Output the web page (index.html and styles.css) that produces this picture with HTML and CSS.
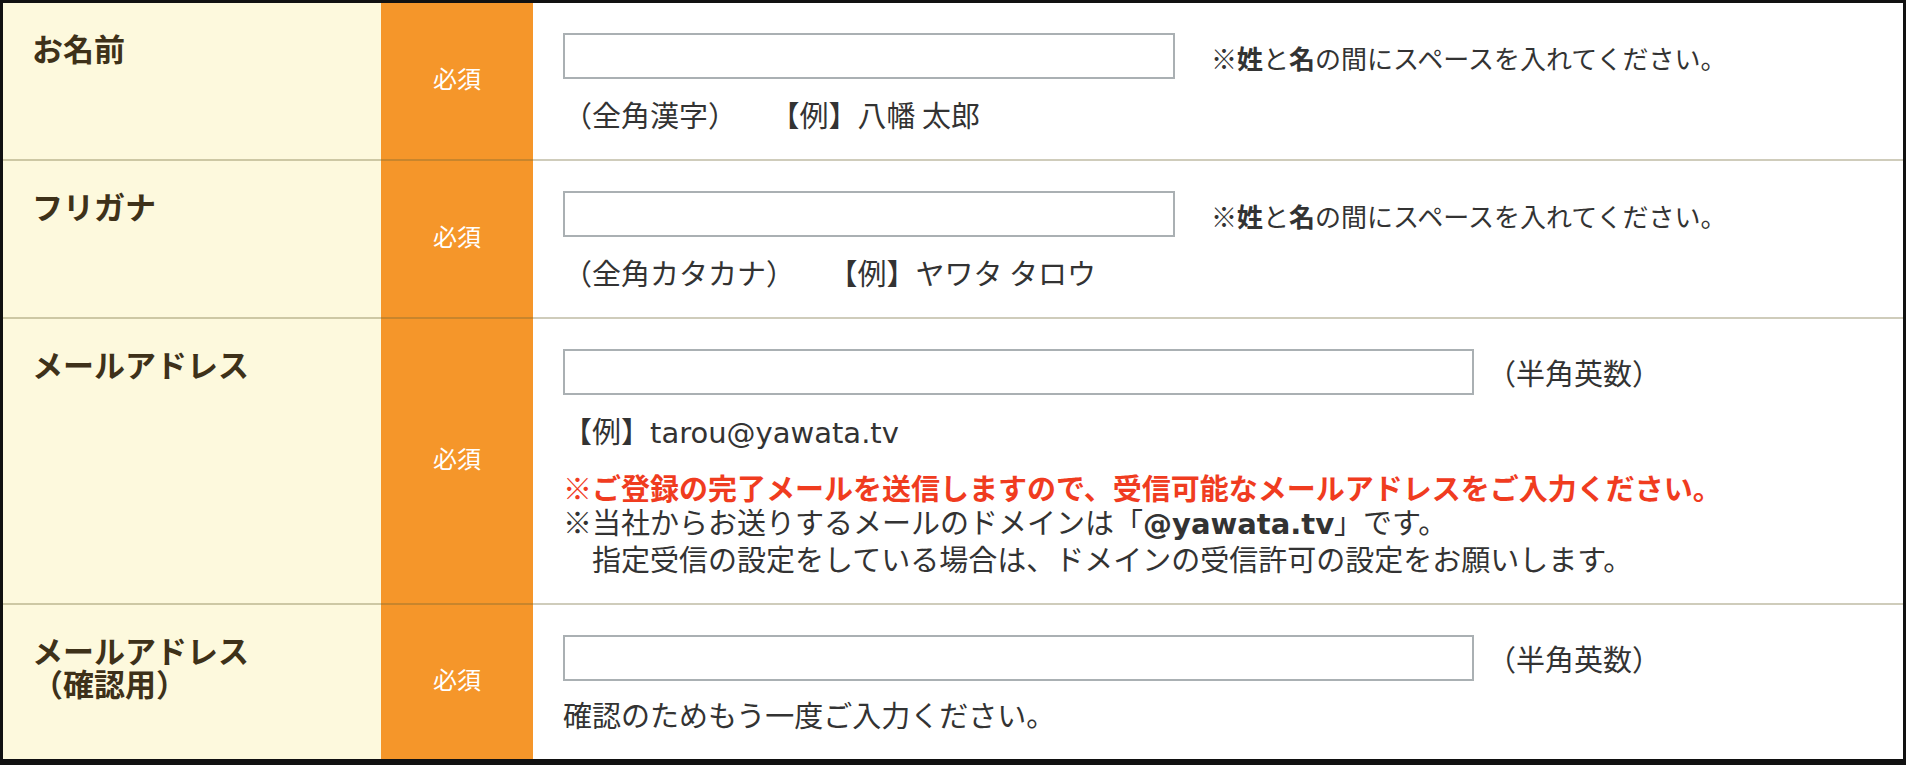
FILE: index.html
```html
<!DOCTYPE html>
<html lang="ja">
<head>
    <meta charset="UTF-8">
    <meta name="viewport" content="width=device-width, initial-scale=1.0">
    <title>お申し込みフォーム</title>
    <link rel="stylesheet" href="styles.css">
</head>
<body>
    <div class="form-table">
        <div class="row">
            <div class="label">お名前</div>
            <div class="req"><span>必須</span></div>
            <div class="field">
                <div class="input-line">
                    <input type="text" class="input-short" name="name">
                    <p class="note">※<b>姓</b>と<b>名</b>の間にスペースを入れてください。</p>
                </div>
                <p class="hint"><span>（全角漢字）</span><span class="example">【例】八幡 太郎</span></p>
            </div>
        </div>

        <div class="row">
            <div class="label">フリガナ</div>
            <div class="req"><span>必須</span></div>
            <div class="field">
                <div class="input-line">
                    <input type="text" class="input-short" name="kana">
                    <p class="note">※<b>姓</b>と<b>名</b>の間にスペースを入れてください。</p>
                </div>
                <p class="hint"><span>（全角カタカナ）</span><span class="example">【例】ヤワタ タロウ</span></p>
            </div>
        </div>

        <div class="row">
            <div class="label">メールアドレス</div>
            <div class="req"><span>必須</span></div>
            <div class="field">
                <div class="input-line">
                    <input type="email" class="input-long" name="email">
                    <p class="note note-paren">（半角英数）</p>
                </div>
                <p class="hint">【例】<span class="en">tarou@yawata.tv</span></p>
                <p class="warn">※ご登録の完了メールを送信しますので、受信可能なメールアドレスをご入力ください。</p>
                <p class="info">※当社からお送りするメールのドメインは「<b class="en">@yawata.tv</b>」です。<br>　指定受信の設定をしている場合は、ドメインの受信許可の設定をお願いします。</p>
            </div>
        </div>

        <div class="row last">
            <div class="label">メールアドレス<br>（確認用）</div>
            <div class="req"><span>必須</span></div>
            <div class="field">
                <div class="input-line">
                    <input type="email" class="input-long" name="email_confirm">
                    <p class="note note-paren">（半角英数）</p>
                </div>
                <p class="hint hint-tight">確認のためもう一度ご入力ください。</p>
            </div>
        </div>
    </div>
</body>
</html>
```

FILE: styles.css
```css
body {
    margin: 0;
    background-color: #111;
    font-family: "Noto Sans CJK JP", sans-serif;
    color: #333;
}
.form-table {
    border: 3px solid #111;
    background-color: #fff;
}
.row {
    display: grid;
    grid-template-columns: 378px 152px 1fr;
}
.row > div {
    border-bottom: 2px solid rgba(110, 100, 50, 0.33);
}
.row.last > div {
    border-bottom: none;
}
.label {
    background-color: #fdf9dd;
    color: #3e3119;
    font-size: 31px;
    font-weight: bold;
    line-height: 33px;
    padding: 28px 0 0 29px;
}
.req {
    background-color: #f5962a;
    color: #fff;
    font-size: 24px;
    display: flex;
    align-items: center;
    justify-content: center;
    padding-bottom: 8px;
}
.field {
    background-color: #fff;
    padding: 30px 28px 28px 30px;
    font-size: 29px;
    line-height: 34px;
}
.field p {
    margin: 0;
}
.input-line {
    display: flex;
    align-items: center;
}
input {
    box-sizing: border-box;
    height: 46px;
    margin: 0;
    padding: 0 10px;
    border: 2px solid #aab0b3;
    background: #fff;
    font-size: 20px;
}
.input-short {
    width: 612px;
}
.input-long {
    width: 911px;
}
.note {
    margin-left: 36px !important;
    font-size: 26px;
    padding-top: 3px;
}
.note-paren {
    margin-left: 13px !important;
    font-size: 29px;
    padding-top: 0;
}
.hint {
    margin-top: 18px !important;
}
.hint-tight {
    margin-top: 16px !important;
}
.example {
    margin-left: 48px;
}
.en {
    font-family: "DejaVu Sans", sans-serif;
}
.warn {
    margin-top: 20px !important;
    color: #f03c1f;
    font-weight: bold;
}
```
